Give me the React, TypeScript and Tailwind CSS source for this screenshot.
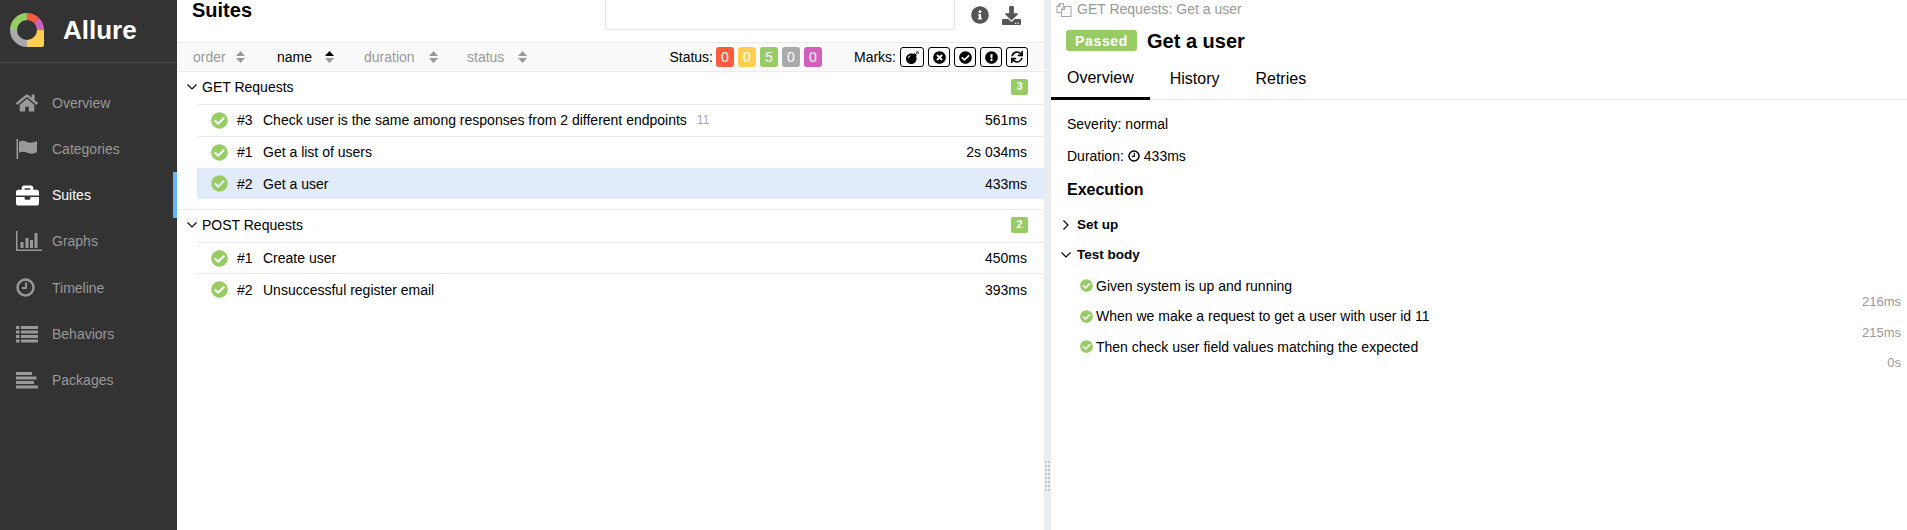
import React from "react";
import {
  FaHome,
  FaBriefcase,
  FaCheckCircle,
  FaInfoCircle,
  FaDownload,
  FaBomb,
  FaTimesCircle,
  FaExclamationCircle,
  FaSync,
} from "react-icons/fa";

const arc = (from: number, to: number) => {
  const r = 13.5;
  const p = (a: number) => {
    const t = ((a - 90) * Math.PI) / 180;
    return `${17 + r * Math.cos(t)} ${17 + r * Math.sin(t)}`;
  };
  return `M${p(from)} A${r} ${r} 0 ${to - from > 180 ? 1 : 0} 1 ${p(to)}`;
};

function Logo() {
  return (
    <svg width="34" height="34" viewBox="0 0 34 34" fill="none" className="shrink-0">
      <path d={arc(270, 360)} stroke="#97cc64" strokeWidth="7" />
      <path d={arc(180, 270)} stroke="#aaaaaa" strokeWidth="7" />
      <path d={arc(0, 45)} stroke="#fd5a3e" strokeWidth="7" />
      <path d={arc(45, 90)} stroke="#d35ebe" strokeWidth="7" />
      <path d={arc(90, 180)} stroke="#ffd050" strokeWidth="7" />
      <path d="M27 17h7v15a2 2 0 0 1-2 2H17v-7h10z" fill="#ffd050" />
    </svg>
  );
}

const FlagIcon = () => (
  <svg width="22" height="20" viewBox="0 0 22 20" fill="currentColor">
    <rect x="0.5" y="0" width="1.6" height="20" />
    <path d="M3 3c3-2 5-1 8 0s6 1 10-1v11c-3 2-6 2-9 1s-6-2-9 0z" />
  </svg>
);

const ChartIcon = () => (
  <svg width="26" height="20" viewBox="0 0 26 20" fill="currentColor">
    <rect x="0" y="0" width="1.5" height="20" />
    <rect x="0" y="18.5" width="26" height="1.5" />
    <rect x="4.5" y="11" width="3" height="6" />
    <rect x="9.5" y="7" width="3" height="10" />
    <rect x="14" y="9" width="3" height="8" />
    <rect x="18.5" y="2" width="3" height="15" />
  </svg>
);

const ClockIcon = ({ size = 19 }: { size?: number }) => (
  <svg width={size} height={size} viewBox="0 0 19 19" fill="none" stroke="currentColor">
    <circle cx="9.5" cy="9.5" r="8" strokeWidth="2.4" />
    <path d="M10 4.5v5.5H6" strokeWidth="1.8" />
  </svg>
);

const ListIcon = () => (
  <svg width="22" height="17" viewBox="0 0 22 17" fill="currentColor">
    {[0, 4.5, 9, 13.5].map((y) => (
      <g key={y}>
        <rect x="0" y={y} width="3.5" height="3" />
        <rect x="5" y={y} width="17" height="3" />
      </g>
    ))}
  </svg>
);

const PackagesIcon = () => (
  <svg width="22" height="17" viewBox="0 0 22 17" fill="currentColor">
    <rect x="0" y="0" width="16" height="3" />
    <rect x="0" y="4.5" width="20.5" height="3" />
    <rect x="0" y="9" width="18" height="3" />
    <rect x="0" y="13.5" width="22" height="3" />
  </svg>
);

const nav: { label: string; icon: React.ReactNode; active?: boolean }[] = [
  { label: "Overview", icon: <FaHome size={22} /> },
  { label: "Categories", icon: <FlagIcon /> },
  { label: "Suites", icon: <FaBriefcase size={23} />, active: true },
  { label: "Graphs", icon: <ChartIcon /> },
  { label: "Timeline", icon: <ClockIcon /> },
  { label: "Behaviors", icon: <ListIcon /> },
  { label: "Packages", icon: <PackagesIcon /> },
];

const SortArrows = ({ active }: { active?: boolean }) => (
  <svg width="9" height="12" viewBox="0 0 9 12" className="shrink-0">
    <path d="M4.5 0L9 5H0z" fill={active ? "#000" : "#999"} />
    <path d="M4.5 12L0 7h9z" fill="#999" />
  </svg>
);

const Chevron = ({ open }: { open: boolean }) =>
  open ? (
    <svg width="10" height="6" viewBox="0 0 10 6" fill="none" stroke="#000" strokeWidth="1.2" className="shrink-0">
      <path d="M0.5 0.5L5 5L9.5 0.5" />
    </svg>
  ) : (
    <svg width="6" height="10" viewBox="0 0 6 10" fill="none" stroke="#000" strokeWidth="1.2" className="shrink-0">
      <path d="M0.5 0.5L5 5L0.5 9.5" />
    </svg>
  );

const CheckIcon = ({ size }: { size: number }) => (
  <span
    className="relative inline-flex shrink-0 items-center justify-center text-[#97cc64]"
    style={{ width: size, height: size }}
  >
    <FaCheckCircle size={size} />
  </span>
);

function Row({
  num,
  name,
  time,
  extra,
  selected,
  tall,
}: {
  num: string;
  name: string;
  time: string;
  extra?: string;
  selected?: boolean;
  tall?: boolean;
}) {
  return (
    <div
      className={`ml-5 flex items-center pl-[14px] pr-[17px] border-t ${tall ? "h-[31.8px]" : selected ? "h-[31.4px]" : "h-[31.6px]"} ${
        selected ? "bg-[#e2ebfa] border-[#e2ebfa]" : "border-[#ebebeb]"
      }`}
    >
      <CheckIcon size={17} />
      <span className="ml-[9px] w-[26px]">{num}</span>
      <span>{name}</span>
      {extra && <span className="ml-[10px] text-xs text-[#aaa]">{extra}</span>}
      <span className="ml-auto">{time}</span>
    </div>
  );
}

const GroupHead = ({ title, count, first }: { title: string; count: string; first?: boolean }) => (
  <div className={`flex h-[32px] items-center pl-[10px] pr-4 ${first ? "pb-[3px]" : "pb-px"}`}>
    <Chevron open />
    <span className="ml-[5px]">{title}</span>
    <span className="ml-auto flex h-[16px] w-[17px] items-center justify-center rounded-[2px] bg-[#97cc64] text-[11px] font-bold text-white">
      {count}
    </span>
  </div>
);

const StepRow = ({ text, time }: { text: string; time: string }) => (
  <div className="h-[30.7px]">
    <div className="flex h-[15px] items-center pl-[29px]">
      <CheckIcon size={13} />
      <span className="ml-[3px]">{text}</span>
    </div>
    <div className="mt-px pr-[6px] text-right text-[13px] leading-[15px] text-[#999]">{time}</div>
  </div>
);

export default function App() {
  return (
    <div
      className="flex h-[530px] w-full overflow-hidden bg-white text-sm text-black"
      style={{ fontFamily: '"Liberation Sans", Arial, sans-serif' }}
    >
      {/* Sidebar */}
      <aside className="w-[177px] shrink-0 bg-[#333] text-[#999]">
        <div className="flex h-[63px] items-center border-b border-[#4a4a4a] pl-[10px] pb-[2px]">
          <Logo />
          <span className="ml-[19px] text-[26px] font-bold leading-none text-white">Allure</span>
        </div>
        <nav className="mt-[16.4px]">
          {nav.map((n) => (
            <div
              key={n.label}
              className={`flex h-[46.3px] items-center border-r-4 ${
                n.active ? "border-[#64b5f6] text-white" : "border-transparent"
              }`}
            >
              <span className="flex w-[52px] shrink-0 justify-start pl-4">{n.icon}</span>
              <span>{n.label}</span>
            </div>
          ))}
        </nav>
      </aside>

      {/* Suites panel */}
      <main className="w-[867px] shrink-0">
        <div className="flex h-[42px] pr-[23px]">
          <h2 className="ml-[15px] -mt-[2px] text-xl font-bold leading-[24px]">Suites</h2>
          <div className="ml-auto h-[30px] w-[350px] border-x border-b border-[#e5e5e5]" />
          <div className="ml-[16px] flex h-[30px] items-center gap-[13px] text-[#555]">
            <FaInfoCircle size={18} />
            <FaDownload size={19} />
          </div>
        </div>

        <div className="flex h-[30px] items-center border-y border-[#ebebeb] bg-[#fafafa] pr-4 text-[#999]">
          <div className="ml-4 flex w-[84px] items-center gap-[10px]">
            <span>order</span>
            <SortArrows />
          </div>
          <div className="flex w-[87px] items-center gap-[13px] text-black">
            <span>name</span>
            <SortArrows active />
          </div>
          <div className="flex w-[103px] items-center gap-[14px]">
            <span>duration</span>
            <SortArrows />
          </div>
          <div className="flex items-center gap-[14px]">
            <span>status</span>
            <SortArrows />
          </div>
          <div className="ml-auto flex items-center text-black">
            <span className="mr-[3px]">Status:</span>
            <div className="flex gap-1">
              {[
                ["0", "bg-[#fd5a3e]"],
                ["0", "bg-[#ffd050]"],
                ["5", "bg-[#97cc64]"],
                ["0", "bg-[#aaaaaa]"],
                ["0", "bg-[#d35ebe]"],
              ].map(([v, c], i) => (
                <span
                  key={i}
                  className={`flex h-[20px] w-[18px] items-center justify-center rounded-[3px] text-white ${c}`}
                >
                  {v}
                </span>
              ))}
            </div>
            <span className="ml-[32px] mr-1">Marks:</span>
            <div className="flex gap-1">
              <span className="flex h-[20px] w-[24px] items-center justify-center rounded-[3px] border border-black">
                <FaBomb size={13} />
              </span>
              <span className="flex h-[20px] w-[22px] items-center justify-center rounded-[3px] border border-black">
                <FaTimesCircle size={13} />
              </span>
              <span className="flex h-[20px] w-[22px] items-center justify-center rounded-[3px] border border-black">
                <FaCheckCircle size={13} />
              </span>
              <span className="flex h-[20px] w-[22px] items-center justify-center rounded-[3px] border border-black">
                <FaExclamationCircle size={13} />
              </span>
              <span className="flex h-[20px] w-[22px] items-center justify-center rounded-[3px] border border-black">
                <FaSync size={12} />
              </span>
            </div>
          </div>
        </div>

        <GroupHead title="GET Requests" count="3" first />
        <Row
          num="#3"
          name="Check user is the same among responses from 2 different endpoints"
          extra="11"
          time="561ms"
          tall
        />
        <Row num="#1" name="Get a list of users" time="2s 034ms" tall />
        <Row num="#2" name="Get a user" time="433ms" selected />

        <div className="mt-[9.8px] border-t border-[#ebebeb]">
          <GroupHead title="POST Requests" count="2" />
          <Row num="#1" name="Create user" time="450ms" />
          <Row num="#2" name="Unsuccessful register email" time="393ms" />
        </div>
      </main>

      {/* Splitter */}
      <div className="w-[7px] shrink-0 bg-[#e9edf0] pt-[461px]">
        <div className="ml-px grid w-[5px] grid-cols-[2px_2px] gap-x-px gap-y-[2px]">
          {Array.from({ length: 16 }).map((_, i) => (
            <span key={i} className="h-[2px] bg-[#c8c8c8]" />
          ))}
        </div>
      </div>

      {/* Detail panel */}
      <section className="min-w-0 flex-1">
        <div className="flex h-[18px] items-center pl-[5px] text-[#999]">
          <svg width="16" height="15" viewBox="0 0 16 15" fill="none" stroke="#aaa" strokeWidth="1.1">
            <path d="M5.5 10.5H1V4.5L4 1.5h3.5v3" />
            <path d="M4 1.5v3H1" />
            <path d="M5.5 14.5V7.5L8.5 4.5H15v10z" />
            <path d="M8.5 4.5v3h-3" />
          </svg>
          <span className="ml-[5px]">GET Requests: Get a user</span>
        </div>
        <div className="mt-[12px] flex h-[21px] items-center pl-[15px]">
          <span className="flex h-[21px] w-[71px] items-center justify-center rounded-[3px] bg-[#97cc64] font-bold tracking-[0.7px] text-white">
            Passed
          </span>
          <span className="ml-[10px] text-xl font-bold leading-none">Get a user</span>
        </div>
        <div className="mt-[10px] flex h-[39px] gap-1 border-b border-[#e5e5e5] text-base">
          <div className="flex h-[39px] items-center border-b-[3px] border-black px-4 pb-[2px]">Overview</div>
          <div className="flex h-[36px] items-center px-4">History</div>
          <div className="flex h-[36px] items-center px-4">Retries</div>
        </div>

        <div className="mt-[16px] pl-4 leading-4">Severity: normal</div>
        <div className="mt-4 flex items-center pl-4 leading-4">
          <span>Duration:</span>
          <span className="ml-1"><ClockIcon size={12} /></span>
          <span className="ml-1">433ms</span>
        </div>
        <h3 className="mt-[17px] pl-4 text-base font-bold leading-[18px]">Execution</h3>

        <div className="mt-[18px] flex h-4 items-center pl-3 text-[13.5px] font-bold">
          <Chevron open={false} />
          <span className="ml-[8px]">Set up</span>
        </div>
        <div className="mt-[14px] flex h-4 items-center pl-[10px] text-[13.5px] font-bold">
          <Chevron open />
          <span className="ml-[6px]">Test body</span>
        </div>
        <div className="mt-[15px]">
          <StepRow text="Given system is up and running" time="216ms" />
          <StepRow text="When we make a request to get a user with user id 11" time="215ms" />
          <StepRow text="Then check user field values matching the expected" time="0s" />
        </div>
      </section>
    </div>
  );
}
